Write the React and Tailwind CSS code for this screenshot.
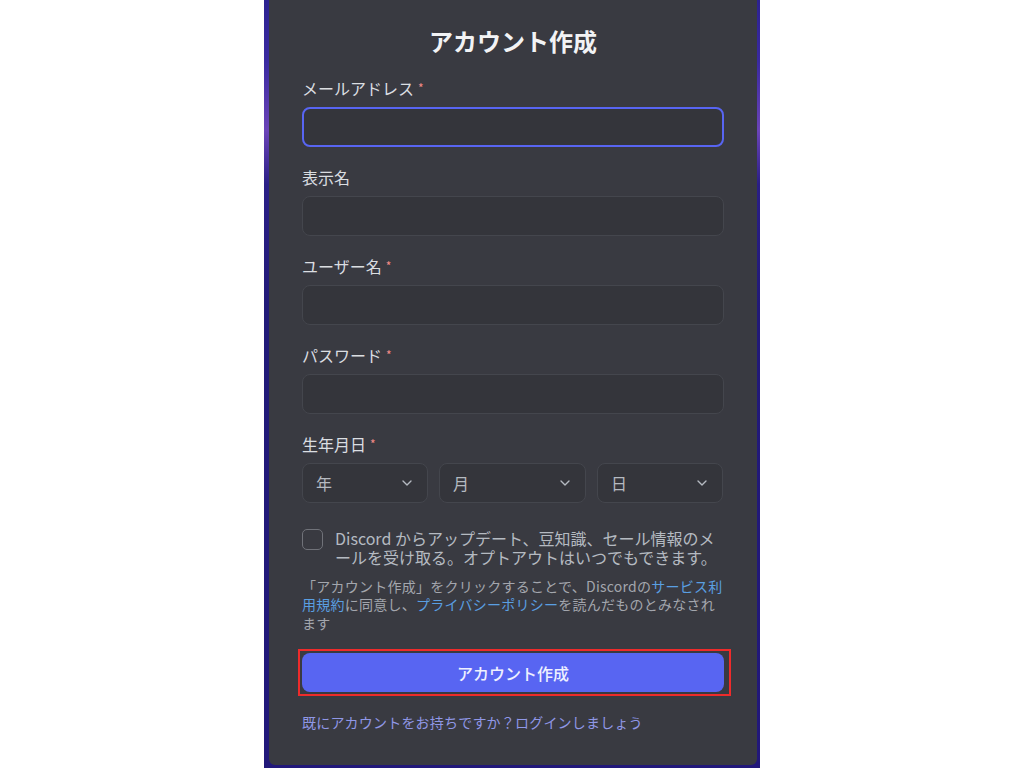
import { ChevronDown } from "lucide-react";

const font = { fontFamily: '"Noto Sans CJK JP", "Noto Sans", sans-serif' };

function Label({ children, required }) {
  return (
    <div className="h-5 mb-[9px] flex items-center text-[16px] leading-5 text-[#dbdee1]">
      {children}
      {required && <span className="ml-1 text-[12px] text-[#f28b86]">*</span>}
    </div>
  );
}

function Field({ label, required, focused }) {
  return (
    <div className="mb-5">
      <Label required={required}>{label}</Label>
      <div
        className={
          focused
            ? "h-10 rounded-[8px] border-2 border-[#5865f2] bg-[#34353b]"
            : "h-10 rounded-[8px] border border-[#44464d] bg-[#34353b]"
        }
      />
    </div>
  );
}

function Select({ text, width }) {
  return (
    <div
      className={`h-10 ${width} rounded-[8px] border border-[#44464d] bg-[#34353b] flex items-center justify-between pl-[13px] pr-[12px]`}
    >
      <span className="text-[16px] text-[#b5bac1]">{text}</span>
      <ChevronDown size={16} strokeWidth={2} className="text-[#b5bac1]" />
    </div>
  );
}

export default function App() {
  return (
    <div className="w-full h-[768px] bg-white flex justify-center overflow-hidden" style={font}>
      <div className="w-[496px] h-[768px] bg-[linear-gradient(180deg,#2c2290_0%,#3a2aa0_8%,#6b44b8_17%,#2a1f86_24%,#221a78_40%,#22187a_100%)]">
        <div className="ml-[5px] w-[488px] h-[765px] rounded-b-[6px] bg-[#393a41] px-[33px] pt-[26px]">
          <h1 className="h-[30px] text-center text-[24px] leading-[30px] font-bold text-[#f2f3f5]">
            アカウント作成
          </h1>
          <div className="mt-[22px]">
            <Field label="メールアドレス" required focused />
            <Field label="表示名" />
            <Field label="ユーザー名" required />
            <Field label="パスワード" required />
            <div>
              <Label required>生年月日</Label>
              <div className="flex gap-[11px]">
                <Select text="年" width="w-[126px]" />
                <Select text="月" width="w-[147px]" />
                <Select text="日" width="w-[126px]" />
              </div>
            </div>
          </div>

          <div className="mt-[26px] flex gap-[12px]">
            <div className="w-[21px] h-[21px] shrink-0 rounded-[5px] border-[1.5px] border-[#707279]" />
            <p className="text-[16px] leading-[19.5px] text-[#b5bac1] -mt-[0.5px]">
              Discord からアップデート、豆知識、セール情報のメ
              <br />
              ールを受け取る。オプトアウトはいつでもできます。
            </p>
          </div>

          <p className="mt-[9px] text-[14px] leading-[18.5px] tracking-[0.25px] text-[#a3a6ad]">
            「アカウント作成」をクリックすることで、Discordの
            <span className="text-[#5a9fe2]">サービス利用規約</span>
            に同意し、
            <span className="text-[#5a9fe2]">プライバシーポリシー</span>
            を読んだものとみなされます
          </p>

          <div className="relative mt-[21px]">
            <button className="w-full h-[39px] rounded-[8px] bg-[#5865f2] text-[16px] font-medium text-[#eef0ff]">
              アカウント作成
            </button>
            <span className="absolute -left-[4px] -right-[7px] -top-[4px] -bottom-[4px] border-2 border-[#ee2b2b]" />
          </div>

          <div className="mt-[21px] text-[14px] leading-[18px] tracking-[0.2px] text-[#9097e6]">
            既にアカウントをお持ちですか？ログインしましょう
          </div>
        </div>
      </div>
    </div>
  );
}
